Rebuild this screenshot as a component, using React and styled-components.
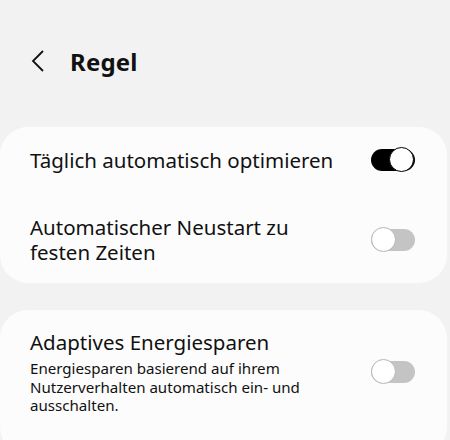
import React from 'react';
import styled, { createGlobalStyle } from 'styled-components';

const GlobalStyle = createGlobalStyle`
	html, body {
		margin: 0;
		padding: 0;
		background: #f2f2f2;
		font-family: 'Noto Sans', 'Open Sans', sans-serif;
		color: #111;
	}
`;

const Page = styled.div`
	width: 450px;
	height: 440px;
	overflow: hidden;
	display: flex;
	flex-direction: column;
	& > * {
		flex-shrink: 0;
	}
`;

const Header = styled.div`
	display: flex;
	align-items: center;
	height: 60px;
	margin-top: 31px;
	padding-left: 30px;
	gap: 24px;
`;

const Title = styled.h1`
	margin: 0;
	font-size: 24px;
	font-weight: 700;
	letter-spacing: 0.2px;
`;

const Card = styled.div`
	background: #fcfcfc;
	border-radius: 28px;
	margin: ${(p) => p.$top}px 3px 0 0;
	padding: ${(p) => p.$pad};
	display: flex;
	flex-direction: column;
	gap: ${(p) => p.$gap || 0}px;
`;

const Row = styled.div`
	display: flex;
	align-items: center;
	justify-content: space-between;
	min-height: ${(p) => p.$h}px;
	padding: 0 32px 0 30px;
`;

const Texts = styled.div`
	display: flex;
	flex-direction: column;
	max-width: 310px;
`;

const Label = styled.div`
	font-size: 20.5px;
	line-height: 25px;
`;

const Sub = styled.div`
	font-size: 15.1px;
	line-height: 18.5px;
	margin-top: 4px;
`;

const Track = styled.div`
	position: relative;
	width: 44px;
	height: 22px;
	border-radius: 11px;
	background: ${(p) => (p.$on ? '#000' : '#c4c4c4')};
	flex-shrink: 0;
`;

const Thumb = styled.div`
	position: absolute;
	top: -2px;
	left: ${(p) => (p.$on ? '18px' : '0')};
	width: 23px;
	height: 23px;
	border-radius: 50%;
	background: #fff;
	border: 1.5px solid ${(p) => (p.$on ? '#000' : '#b5b5b5')};
`;

const Toggle = ({ on }) => (
	<Track $on={on}>
		<Thumb $on={on} />
	</Track>
);

const App = () => {
	return (
		<Page>
			<GlobalStyle />
			<Header>
				<svg width="16" height="24" viewBox="0 0 16 24">
					<path d="M13 2 L3 12 L13 22" fill="none" stroke="#111" strokeWidth="1.8" />
				</svg>
				<Title>Regel</Title>
			</Header>

			<Card $top={36} $pad="0" $gap={4}>
				<Row $h={66}>
					<Label>Täglich automatisch optimieren</Label>
					<Toggle on />
				</Row>
				<Row $h={86}>
					<Texts>
						<Label>Automatischer Neustart zu festen Zeiten</Label>
					</Texts>
					<Toggle />
				</Row>
			</Card>

			<Card $top={27} $pad="20px 0 40px">
				<Row $h={80}>
					<Texts>
						<Label>Adaptives Energiesparen</Label>
						<Sub>Energiesparen basierend auf ihrem Nutzerverhalten automatisch ein- und ausschalten.</Sub>
					</Texts>
					<Toggle />
				</Row>
			</Card>
		</Page>
	);
};

export default App;
